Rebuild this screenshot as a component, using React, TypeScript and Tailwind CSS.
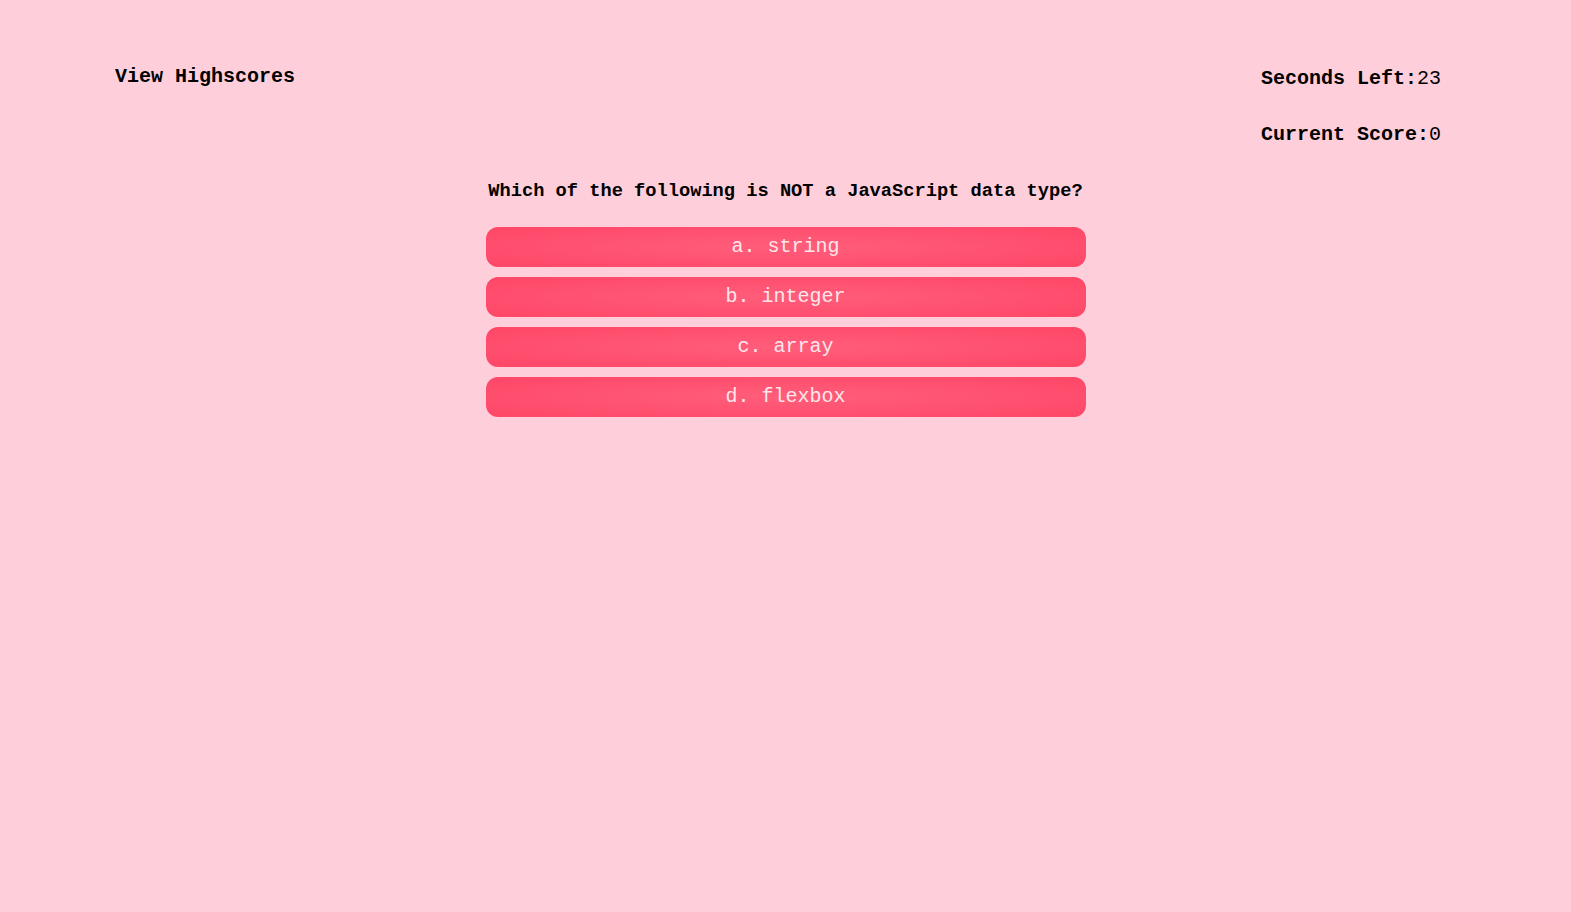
const answers = ['a. string', 'b. integer', 'c. array', 'd. flexbox'];

export default function App() {
  return (
    <div className="min-h-screen bg-[#ffcedb] text-black font-['Courier_New','Liberation_Mono',monospace]">
      <header className="flex justify-between items-start pl-[115px] pr-[130px] pt-[65px]">
        <a href="#" className="text-[20px] leading-[24px] font-bold">
          View Highscores
        </a>
        <div className="flex flex-col gap-[32px] pt-[2px] text-[20px] leading-[24px]">
          <p>
            <span className="font-bold">Seconds Left:</span>23
          </p>
          <p>
            <span className="font-bold">Current Score:</span>0
          </p>
        </div>
      </header>

      <main className="flex flex-col items-center mt-[32px]">
        <h2 className="text-[18.7px] leading-[24px] font-bold">
          Which of the following is NOT a JavaScript data type?
        </h2>
        <div className="flex flex-col gap-[10px] mt-[24px] w-[600px]">
          {answers.map((a) => (
            <button
              key={a}
              className="h-[40px] rounded-[12px] bg-[radial-gradient(ellipse_at_center,#ff5e7b_0%,#ff4667_100%)] text-[#ffe6ec] text-[20px] leading-[24px]"
            >
              {a}
            </button>
          ))}
        </div>
      </main>
    </div>
  );
}
